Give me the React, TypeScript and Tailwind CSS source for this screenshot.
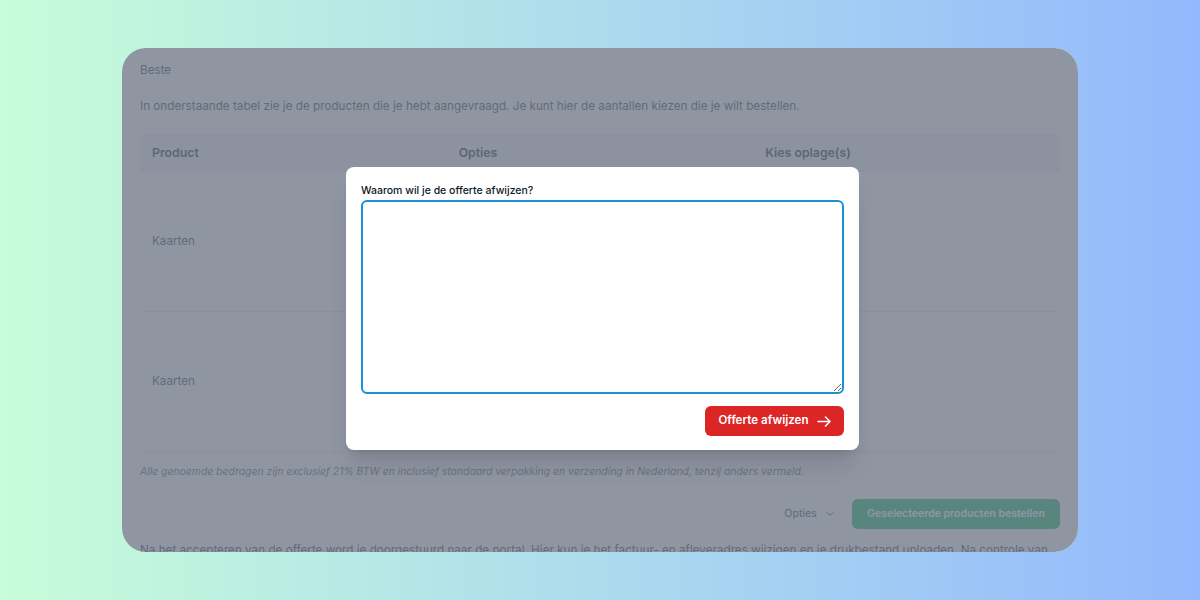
import { ChevronDown } from "lucide-react";

const rows = ["Kaarten", "Kaarten"];

function Arrow() {
  return (
    <svg width="14" height="11" viewBox="0 0 14 11" fill="none">
      <path
        d="M1 5.5h12M8.5 1l4.5 4.5L8.5 10"
        stroke="currentColor"
        strokeWidth="1.6"
        strokeLinecap="round"
        strokeLinejoin="round"
      />
    </svg>
  );
}

export default function App() {
  return (
    <div className="flex h-[600px] w-full items-center justify-center bg-gradient-to-r from-[#c7fdd9] to-[#94b8fc] font-['Inter',sans-serif]">
      <div className="relative h-[504px] w-[956px] overflow-hidden rounded-[24px] bg-white">
        <div className="px-[18px] pt-3 text-[11.7px] text-gray-600">
          <p className="leading-5">Beste</p>
          <p className="mt-4 leading-5">
            In onderstaande tabel zie je de producten die je hebt aangevraagd. Je kunt hier de aantallen kiezen die je
            wilt bestellen.
          </p>

          <div className="mt-[18px]">
            <div className="grid h-[38px] grid-cols-3 items-center bg-gray-100 text-[12.3px] font-semibold text-gray-700">
              <span className="px-3">Product</span>
              <span className="px-3">Opties</span>
              <span className="px-3">Kies oplage(s)</span>
            </div>
            {rows.map((name, i) => (
              <div key={i} className="grid h-[140px] grid-cols-3 items-center border-b border-gray-200">
                <span className="px-3">{name}</span>
                <span className="px-3" />
                <span className="px-3" />
              </div>
            ))}
          </div>

          <p className="mt-3 text-[10.4px] italic leading-4 text-gray-500">
            Alle genoemde bedragen zijn exclusief 21% BTW en inclusief standaard verpakking en verzending in Nederland,
            tenzij anders vermeld.
          </p>

          <div className="mt-[19px] flex items-center justify-end gap-4">
            <button className="flex items-center gap-[7px] text-[10.7px] text-gray-600">
              Opties
              <ChevronDown size={12} strokeWidth={2} />
            </button>
            <button className="h-[30px] w-[208px] rounded-md bg-[#24c27a] text-[10.5px] font-semibold text-white">
              Geselecteerde producten bestellen
            </button>
          </div>

          <p className="mt-[11px] whitespace-nowrap leading-5">
            Na het accepteren van de offerte word je doorgestuurd naar de portal. Hier kun je het factuur- en
            afleveradres wijzigen en je drukbestand uploaden. Na controle van
          </p>
        </div>

        <div className="absolute inset-0 bg-gray-500/75" />

        <div className="absolute left-[224px] top-[119px] w-[513px] rounded-lg bg-white px-[15px] pb-[14px] pt-4 shadow-xl">
          <label className="block text-[10.5px] font-medium leading-4 text-gray-900">
            Waarom wil je de offerte afwijzen?
          </label>
          <textarea className="mt-px block h-[194px] w-full rounded-md border-2 border-[#1b8fd8] outline-none" />
          <div className="mt-3 flex justify-end">
            <button className="flex h-[30px] w-[139px] items-center justify-center gap-2 rounded-md bg-[#dc2626] text-[11.6px] font-semibold text-white">
              Offerte afwijzen
              <Arrow />
            </button>
          </div>
        </div>
      </div>
    </div>
  );
}
